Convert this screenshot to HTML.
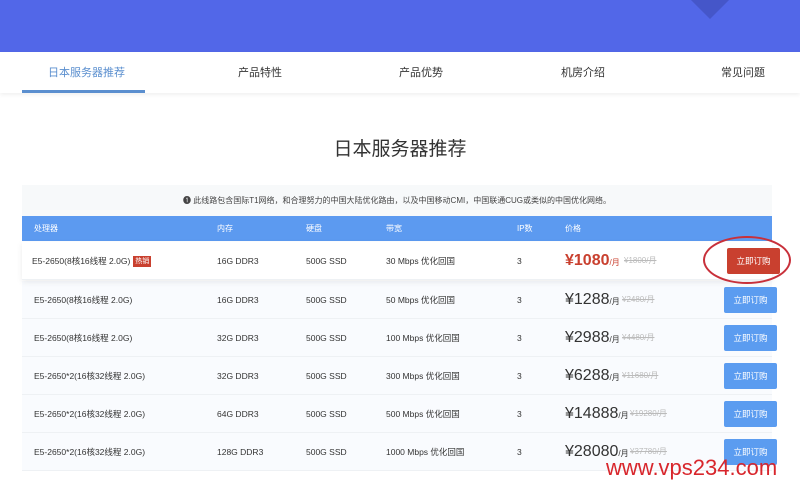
<!DOCTYPE html>
<html><head><meta charset="utf-8"><style>
*{margin:0;padding:0;box-sizing:border-box}
body{width:800px;height:486px;overflow:hidden;background:#fff;font-family:"Liberation Sans","Noto Sans CJK SC",sans-serif;position:relative;color:#333}
.ban{position:absolute;left:0;top:0;width:800px;height:52px;background:#5267e8}
.tri{position:absolute;left:693px;top:-22px;width:34px;height:34px;background:#4556c9;transform:rotate(45deg)}
.nav{position:absolute;top:52px;left:0;width:800px;height:41px;background:#fff;box-shadow:0 2px 4px rgba(0,0,0,.06)}
.nav span{position:absolute;top:14px;font-size:11px;color:#333;line-height:14px}
.ul{position:absolute;left:22px;top:90px;width:123px;height:3px;background:#5b8fcf}
h1{position:absolute;top:134px;width:800px;text-align:center;font-size:19px;font-weight:normal;color:#333}
.note{position:absolute;left:22px;top:185px;width:750px;height:31px;background:#f7f9fa;font-size:8px;text-align:center;line-height:31px;color:#444}
.hd{position:absolute;left:22px;top:216px;width:750px;height:25px;background:#5c9af0;color:#fff;font-size:8px}
.hd span,.r span{position:absolute}
.hd span{top:0;line-height:25px}
.r{position:absolute;left:22px;width:750px;height:38px;font-size:8.5px;border-bottom:1px solid #eef1f4;background:#f9fbfe}
.r span{top:0;line-height:38px}
.r .p{font-size:16px;color:#333}
.r .p small{font-size:8px}
.r .o{font-size:8px;color:#bbb;text-decoration:line-through}
.btn{position:absolute;left:702px;top:6px;width:53px;height:26px;background:#5b9cf0;color:#fff;font-size:8.5px;text-align:center;line-height:26px;border-radius:2px}
.hot{display:inline-block;background:#c9402f;color:#fff;font-size:7px;padding:0 2px;line-height:11px;margin-left:3px;vertical-align:middle}
</style></head><body>
<div class="ban"><div class="tri"></div></div>
<div class="nav">
<span style="left:48px;color:#5b8fcf">日本服务器推荐</span>
<span style="left:238px">产品特性</span>
<span style="left:399px">产品优势</span>
<span style="left:561px">机房介绍</span>
<span style="left:721px">常见问题</span>
</div>
<div class="ul"></div>
<h1>日本服务器推荐</h1>
<div class="note">❶ 此线路包含国际T1网络，和合理努力的中国大陆优化路由，以及中国移动CMI，中国联通CUG或类似的中国优化网络。</div>
<div class="hd"><span style="left:12px">处理器</span><span style="left:195px">内存</span><span style="left:284px">硬盘</span><span style="left:364px">带宽</span><span style="left:495px">IP数</span><span style="left:543px">价格</span></div>

<div class="r" style="top:242px;background:#fff;box-shadow:0 2px 6px rgba(0,0,0,.08);z-index:2"><span style="left:10px">E5-2650(8核16线程 2.0G)<i class="hot" style="font-style:normal">热销</i></span><span style="left:195px">16G DDR3</span><span style="left:284px">500G SSD</span><span style="left:364px">30 Mbps 优化回国</span><span style="left:495px">3</span><span class="p" style="left:543px;color:#c9402f;font-weight:bold">¥1080<small style="font-weight:normal">/月</small></span><span class="o" style="left:602px">¥1800/月</span><div class="btn" style="background:#c9402f;left:705px">立即订购</div>
<div style="position:absolute;left:681px;top:-6px;width:88px;height:48px;border:2px solid #c8303a;border-radius:50%"></div></div>

<div class="r" style="top:281px"><span style="left:12px">E5-2650(8核16线程 2.0G)</span><span style="left:195px">16G DDR3</span><span style="left:284px">500G SSD</span><span style="left:364px">50 Mbps 优化回国</span><span style="left:495px">3</span><span class="p" style="left:543px">¥1288<small>/月</small></span><span class="o" style="left:600px">¥2480/月</span><div class="btn">立即订购</div></div>
<div class="r" style="top:319px"><span style="left:12px">E5-2650(8核16线程 2.0G)</span><span style="left:195px">32G DDR3</span><span style="left:284px">500G SSD</span><span style="left:364px">100 Mbps 优化回国</span><span style="left:495px">3</span><span class="p" style="left:543px">¥2988<small>/月</small></span><span class="o" style="left:600px">¥4480/月</span><div class="btn">立即订购</div></div>
<div class="r" style="top:357px"><span style="left:12px">E5-2650*2(16核32线程 2.0G)</span><span style="left:195px">32G DDR3</span><span style="left:284px">500G SSD</span><span style="left:364px">300 Mbps 优化回国</span><span style="left:495px">3</span><span class="p" style="left:543px">¥6288<small>/月</small></span><span class="o" style="left:600px">¥11680/月</span><div class="btn">立即订购</div></div>
<div class="r" style="top:395px"><span style="left:12px">E5-2650*2(16核32线程 2.0G)</span><span style="left:195px">64G DDR3</span><span style="left:284px">500G SSD</span><span style="left:364px">500 Mbps 优化回国</span><span style="left:495px">3</span><span class="p" style="left:543px">¥14888<small>/月</small></span><span class="o" style="left:608px">¥19280/月</span><div class="btn">立即订购</div></div>
<div class="r" style="top:433px"><span style="left:12px">E5-2650*2(16核32线程 2.0G)</span><span style="left:195px">128G DDR3</span><span style="left:284px">500G SSD</span><span style="left:364px">1000 Mbps 优化回国</span><span style="left:495px">3</span><span class="p" style="left:543px">¥28080<small>/月</small></span><span class="o" style="left:608px">¥37780/月</span><div class="btn">立即订购</div></div>
<div style="position:absolute;left:606px;top:455px;font-size:22px;color:#d8262c;z-index:5;line-height:26px">www.vps234.com</div>
</body></html>
